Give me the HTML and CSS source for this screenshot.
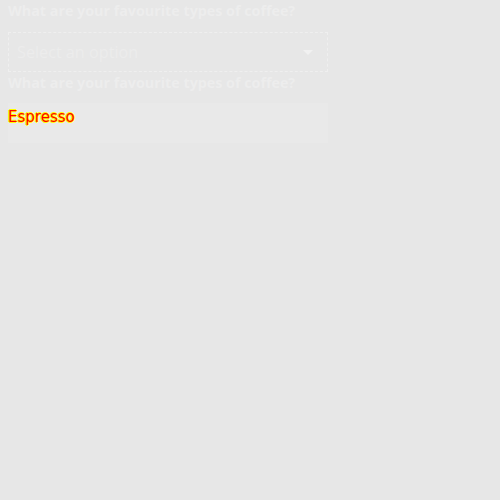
FILE: index.html
```html
<!DOCTYPE html>
<html>
<head>
<meta charset="utf-8">
<link rel="stylesheet" href="styles.css">
</head>
<body>
<div class="field">
  <label class="label">What are your favourite types of coffee?</label>
  <div class="select">
    <span class="placeholder">Select an option</span>
    <span class="arrow"></span>
  </div>
</div>
<div class="field">
  <label class="label">What are your favourite types of coffee?</label>
  <div class="box">
    <span class="choice">Espresso</span>
  </div>
</div>
</body>
</html>
```
FILE: styles.css
```css
html, body {
  margin: 0;
  background: #e7e7e7;
}
body {
  padding: 0 8px;
  font-family: "Open Sans", sans-serif;
  width: 320px;
}
.field {
  display: flex;
  flex-direction: column;
}
.label {
  font-weight: 700;
  font-size: 14.3px;
  line-height: 22px;
  color: #ededed;
  margin-bottom: 10px;
}
.select {
  height: 38px;
  border: 1px dashed #efefef;
  display: flex;
  align-items: center;
  justify-content: space-between;
  padding: 0 14px 0 8px;
}
.placeholder {
  font-size: 16.2px;
  color: #ececec;
}
.arrow {
  width: 0;
  height: 0;
  border-left: 5px solid transparent;
  border-right: 5px solid transparent;
  border-top: 5px solid #f1f1f1;
}
.field + .field .label {
  margin-bottom: 9px;
}
.box {
  height: 40px;
  background: #e9e9e9;
  display: flex;
  align-items: flex-start;
}
.choice {
  font-family: "DejaVu Sans", sans-serif;
  font-size: 15px;
  line-height: 24px;
  color: #f00;
  margin-top: 2px;
  text-shadow: 1px 0 0 #ff0, -1px 0 0 #ff0, 0 1px 0 #ff0, 0 -1px 0 #ff0;
}
```
